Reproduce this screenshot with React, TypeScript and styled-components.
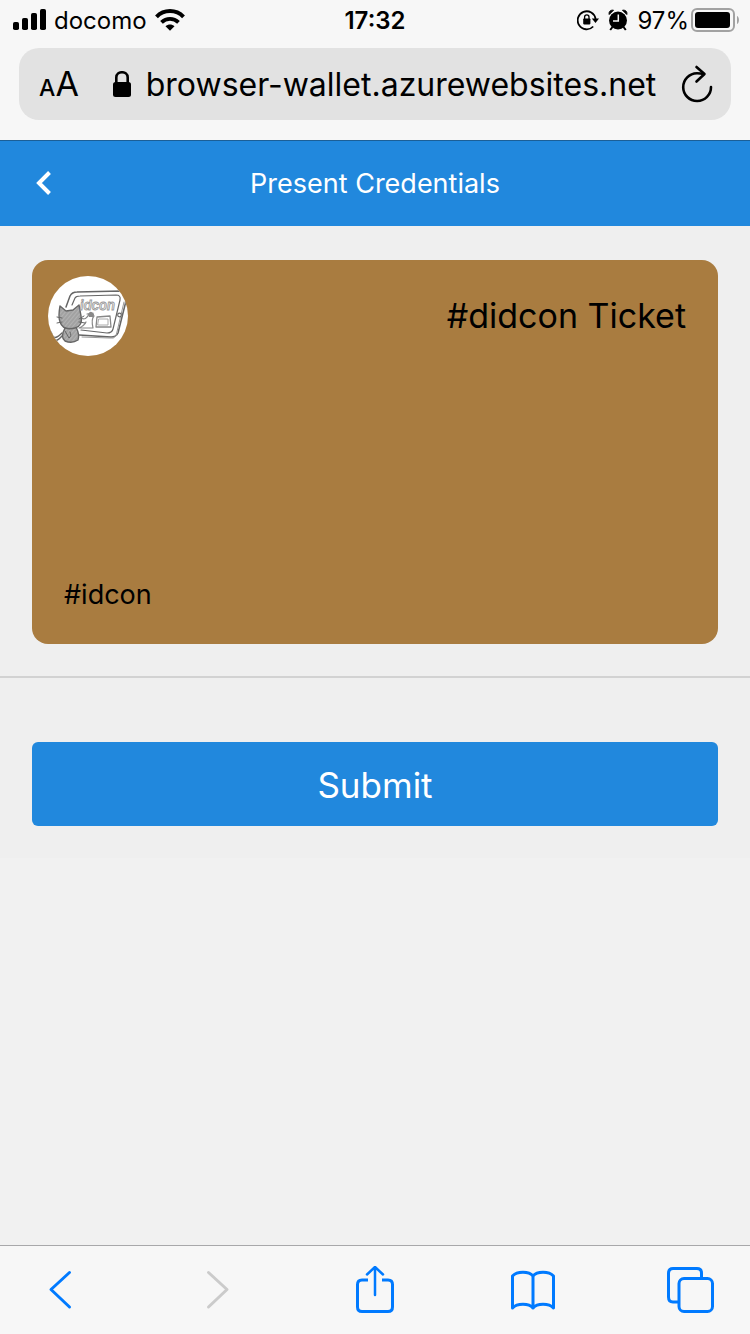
import React from "react";
import styled, { createGlobalStyle } from "styled-components";

const BLUE = "#2188dd";
const TINT = "#007aff";

const GlobalStyle = createGlobalStyle`
  * { box-sizing: border-box; }
  body {
    margin: 0;
    background: #f1f1f1;
    color: #000;
    font-family: Inter, "Liberation Sans", sans-serif;
  }
  button { font-family: inherit; cursor: pointer; }
`;

const Page = styled.div`
  display: flex;
  flex-direction: column;
  min-height: 100vh;
`;

const BrowserTop = styled.header`
  background: #f7f7f7;
  border-bottom: 1px solid #1b5f97;
  padding-bottom: 20px;
`;

const StatusBar = styled.div`
  display: grid;
  grid-template-columns: 1fr auto 1fr;
  align-items: center;
  height: 40px;
  padding: 0 12px;
  font-size: 24px;
  line-height: 40px;
`;

const StatusGroup = styled.div<{ $end?: boolean; $gap: number }>`
  display: flex;
  align-items: center;
  gap: ${(p) => p.$gap}px;
  justify-content: ${(p) => (p.$end ? "flex-end" : "flex-start")};
`;

const StatusText = styled.span`
  padding-top: 2px;
  line-height: 38px;
`;

const Time = styled.time`
  padding-top: 2px;
  font-weight: 600;
  line-height: 38px;
`;

const BatteryGroup = styled.span`
  display: flex;
  align-items: center;
  gap: 2px;
  margin-right: -2px;
`;

const AddressBar = styled.div`
  display: flex;
  align-items: center;
  height: 72px;
  margin: 8px 19px 0;
  padding: 0 16px 0 20px;
  border-radius: 20px;
  background: #e2e2e2;
`;

const PlainButton = styled.button<{ $color?: string }>`
  display: flex;
  align-items: center;
  justify-content: center;
  padding: 0;
  border: 0;
  background: none;
  color: ${(p) => p.$color ?? "#000"};
`;

const TextSizeButton = styled(PlainButton)`
  align-items: baseline;
  width: 40px;
  padding-top: 4px;
  font-size: 34px;
  line-height: 40px;
`;

const SmallA = styled.span`
  font-size: 23px;
  font-weight: 500;
`;

const Address = styled.div`
  display: flex;
  flex: 1;
  align-items: center;
  justify-content: center;
  gap: 14px;
  padding: 2px 0 0 8px;
  font-size: 32px;
  line-height: 40px;
  white-space: nowrap;
`;

const AppHeader = styled.div`
  display: grid;
  grid-template-columns: 88px 1fr 88px;
  align-items: center;
  height: 85px;
  background: ${BLUE};
  color: #fff;
`;

const BackButton = styled(PlainButton)`
  height: 100%;
`;

const Title = styled.h1`
  margin: 0;
  font-size: 27px;
  font-weight: 400;
  line-height: 36px;
  text-align: center;
`;

const Panel = styled.section`
  background: #efefef;
`;

const CardArea = styled.div`
  padding: 34px 32px 32px;
  border-bottom: 2px solid #d2d2d2;
`;

const Card = styled.article`
  display: flex;
  flex-direction: column;
  justify-content: space-between;
  height: 384px;
  padding: 16px 32px 32px 16px;
  border-radius: 16px;
  background: #a97c40;
`;

const CardTop = styled.div`
  display: flex;
  align-items: center;
  justify-content: space-between;
`;

const CardTitle = styled.h2`
  margin: 0;
  font-size: 34px;
  font-weight: 400;
  line-height: 40px;
`;

const Issuer = styled.p`
  margin: 0 0 0 16px;
  font-size: 27px;
  line-height: 34px;
`;

const Actions = styled.div`
  padding: 64px 32px 32px;
`;

const Submit = styled.button`
  display: block;
  width: 100%;
  height: 84px;
  padding: 2px 0 0;
  border: 0;
  border-radius: 6px;
  background: ${BLUE};
  color: #fff;
  font-size: 35px;
  line-height: 40px;
`;

const Toolbar = styled.nav`
  display: flex;
  align-items: center;
  justify-content: space-between;
  height: 89px;
  margin-top: auto;
  padding: 0 36px;
  border-top: 1px solid #a8a8aa;
  background: #f7f7f7;
`;

const ToolIcon = styled.svg`
  width: 48px;
  height: 48px;
  fill: none;
  stroke: currentColor;
  stroke-width: 3;
  stroke-linecap: round;
  stroke-linejoin: round;
`;

const SignalIcon = () => (
  <svg width="34" height="22" viewBox="0 0 34 22" aria-label="Signal">
    <rect x="1" y="13" width="6" height="8" rx="1.8" />
    <rect x="10" y="9" width="6" height="12" rx="1.8" />
    <rect x="19" y="4" width="6" height="17" rx="1.8" />
    <rect x="28" y="0" width="6" height="21" rx="1.8" />
  </svg>
);

const WifiIcon = () => (
  <svg width="30" height="22" viewBox="0 0 30 22" fill="none" stroke="#000" aria-label="Wi-Fi">
    <path d="M1.5 7.8C9 .2 21 .2 28.5 7.8" strokeWidth="4" />
    <path d="M6.5 13.3C11.3 8.6 18.7 8.6 23.5 13.3" strokeWidth="3.8" />
    <path d="M10.5 17.300C13 15 17 15 19.5 17.3L15 21.8Z" fill="#000" stroke="none" />
  </svg>
);

const RotationLockIcon = () => (
  <svg width="22" height="22" viewBox="0 0 22 22" aria-label="Rotation lock">
    <path d="M16.2 17.5A9 9 0 1 1 18.6 10" fill="none" stroke="#000" strokeWidth="1.8" />
    <path d="M14.8 9.500H22L18.5 14Z" />
    <rect x="6.2" y="9.4" width="7.2" height="6" rx="0.8" />
    <path d="M7.600 10V8A2.2 2.2 0 0 1 12 8V10" fill="none" stroke="#000" strokeWidth="1.3" />
  </svg>
);

const AlarmIcon = () => (
  <svg width="20" height="22" viewBox="0 0 20 22" aria-label="Alarm">
    <circle cx="10" cy="11.5" r="9" />
    <path d="M1.2 5.5C.6 3 2 .8 5.5 1.2ZM18.8 5.5C19.4 3 18 .8 14.5 1.2Z" stroke="#000" strokeWidth="1" strokeLinejoin="round" />
    <path d="M4.5 18L2.2 21M15.5 18L17.8 21" stroke="#000" strokeWidth="2" />
    <path d="M10.3 5.5V12H5" fill="none" stroke="#f7f7f7" strokeWidth="1.5" />
  </svg>
);

const BatteryIcon = () => (
  <svg width="49" height="24" viewBox="0 0 49 24" aria-label="Battery">
    <rect x="1" y="1" width="42" height="22" rx="5" fill="none" stroke="#a2a2a2" strokeWidth="2" />
    <rect x="4" y="4" width="35" height="16" rx="3" />
    <path d="M46 8C48.6 9 48.6 15 46 16Z" fill="#a2a2a2" />
  </svg>
);

const LockIcon = () => (
  <svg width="20" height="28" viewBox="0 0 20 28" aria-label="Secure">
    <rect x="1" y="11" width="18" height="15" rx="2.5" />
    <path d="M4.300 12V6.500C4.3 -.5 15.7 -.5 15.7 6.500V12" fill="none" stroke="#000" strokeWidth="2.6" />
  </svg>
);

const ReloadIcon = () => (
  <svg width="34" height="38" viewBox="0 0 34 38" fill="none" stroke="#000" strokeWidth="2.6" strokeLinecap="round" strokeLinejoin="round" aria-hidden="true">
    <path d="M30 22A13.9 13.9 0 1 1 16 8.200C18.5 8.200 20.5 8.5 22.5 9" />
    <path d="M15.500 2L23.500 9L15.500 16.5" />
  </svg>
);

const IssuerLogo = () => (
  <svg width="80" height="80" viewBox="0 0 80 80" role="img" aria-label="idcon logo">
    <defs>
      <clipPath id="logo-clip"><circle cx="40" cy="40" r="40" /></clipPath>
      <pattern id="pencil" width="3" height="3" patternUnits="userSpaceOnUse" patternTransform="rotate(40)">
        <rect width="3" height="3" fill="#a2a2a2" />
        <path d="M0 0V3" stroke="#bdbdbd" strokeWidth="1.2" />
      </pattern>
    </defs>
    <circle cx="40" cy="40" r="40" fill="#fff" />
    <g clipPath="url(#logo-clip)" fill="none" stroke="#666" strokeLinecap="round" strokeLinejoin="round">
      <path d="M18 31L22 20Q24 16 29 16L73 15Q79 16 79 21L70 57Q68 61 63 61L31 59" strokeWidth="1.5" />
      <path d="M24 29L27 22Q28 20 32 20L68 19Q73 19 72 24L65 53Q64 57 59 57L33 54" strokeWidth="1.2" />
      <path d="M76 26L68 60Q66 63 61 62L34 61" stroke="#999" />
      <circle cx="71.5" cy="39" r="1.8" fill="#fff" strokeWidth="1.2" />
      <path d="M49 41L62 40L63 51L48 51Z" stroke="#888" strokeWidth="1.3" />
      <path d="M51 43H60V49H50Z" stroke="#aaa" />
      <path d="M33 42Q38 45 41 38Q43 34 46 40Q43 43 45 52H31Q36 50 38 46M39 38L45 37" stroke="#888" strokeWidth="1.2" />
      <path d="M40 38Q43 35 46 38L45 41H41Z" fill="#888" stroke="none" />
      <path d="M14 57Q6 65 4 59Q3 54 0 55M14 60Q7 68 4 62" strokeWidth="1.5" />
      <path d="M17 52Q12 61 17 65Q24 68 30 64Q32 59 28 51Z" fill="url(#pencil)" strokeWidth="1.4" />
      <path d="M12 30L18 35L25 34L31 29L33 40Q35 50 27 52Q15 55 12 46Q10 41 12 30Z" fill="url(#pencil)" strokeWidth="1.4" />
      <path d="M9 41L14 42M9 47L14 46M31 43L36 40M31 46L37 47" />
      <path d="M17 55L21 62Q24 60 22 56" />
    </g>
    <text x="32" y="34" fontFamily="Inter, sans-serif" fontSize="13" fontStyle="italic" fontWeight="600" fill="#eee" stroke="#999" strokeWidth="0.8">idcon</text>
  </svg>
);

export default function App() {
  return (
    <Page>
      <GlobalStyle />
      <BrowserTop>
        <StatusBar>
          <StatusGroup $gap={8}>
            <SignalIcon />
            <StatusText>docomo</StatusText>
            <WifiIcon />
          </StatusGroup>
          <Time>17:32</Time>
          <StatusGroup $gap={9} $end>
            <RotationLockIcon />
            <AlarmIcon />
            <BatteryGroup>
              <StatusText>97%</StatusText>
              <BatteryIcon />
            </BatteryGroup>
          </StatusGroup>
        </StatusBar>
        <AddressBar>
          <TextSizeButton type="button" aria-label="Text size">
            <SmallA>A</SmallA>A
          </TextSizeButton>
          <Address>
            <LockIcon />
            <span>browser-wallet.azurewebsites.net</span>
          </Address>
          <PlainButton type="button" aria-label="Reload">
            <ReloadIcon />
          </PlainButton>
        </AddressBar>
      </BrowserTop>
      <main>
        <AppHeader>
          <BackButton type="button" aria-label="Back" $color="#fff">
            <svg width="16" height="26" viewBox="0 0 16 26" fill="none" stroke="currentColor" strokeWidth="4" aria-hidden="true">
              <path d="M13.5 1.5L3 12L13.5 22.5" />
            </svg>
          </BackButton>
          <Title>Present Credentials</Title>
        </AppHeader>
        <Panel>
          <CardArea>
            <Card>
              <CardTop>
                <IssuerLogo />
                <CardTitle>#didcon Ticket</CardTitle>
              </CardTop>
              <Issuer>#idcon</Issuer>
            </Card>
          </CardArea>
          <Actions>
            <Submit type="submit">Submit</Submit>
          </Actions>
        </Panel>
      </main>
      <Toolbar aria-label="Browser">
        <PlainButton type="button" aria-label="Previous page" $color={TINT}>
          <ToolIcon viewBox="0 0 48 48"><path d="M33.500 6.500L15 23.500L33.500 41" /></ToolIcon>
        </PlainButton>
        <PlainButton type="button" aria-label="Next page" $color="#cbcbcb" disabled>
          <ToolIcon viewBox="0 0 48 48"><path d="M14.500 6.500L33 23.500L14.500 41" /></ToolIcon>
        </PlainButton>
        <PlainButton type="button" aria-label="Share" $color={TINT}>
          <ToolIcon viewBox="0 0 48 48">
            <path d="M17 14H11Q6.5 14 6.5 18.5V41Q6.5 45.5 11 45.5H37Q41.5 45.5 41.5 41V18.5Q41.5 14 37 14H31" strokeLinecap="butt" />
            <path d="M24 29V1.5M16 8.5L24 1L32 8.5" strokeWidth="2.5" />
          </ToolIcon>
        </PlainButton>
        <PlainButton type="button" aria-label="Bookmarks" $color={TINT}>
          <ToolIcon viewBox="0 0 48 48">
            <path d="M24 10C20 5 8 5 3.5 10V42C8 37 20 37 24 42C28 37 40 37 44.5 42V10C40 5 28 5 24 10V42" />
          </ToolIcon>
        </PlainButton>
        <PlainButton type="button" aria-label="Tabs" $color={TINT}>
          <ToolIcon viewBox="0 0 48 48">
            <rect x="13" y="12.5" width="33.500" height="33" rx="5" />
            <path d="M12 36H7Q2.5 36 2.5 31V7.5Q2.5 2.500 7 2.500H31Q35.5 2.5 35.5 7V12" />
          </ToolIcon>
        </PlainButton>
      </Toolbar>
    </Page>
  );
}
